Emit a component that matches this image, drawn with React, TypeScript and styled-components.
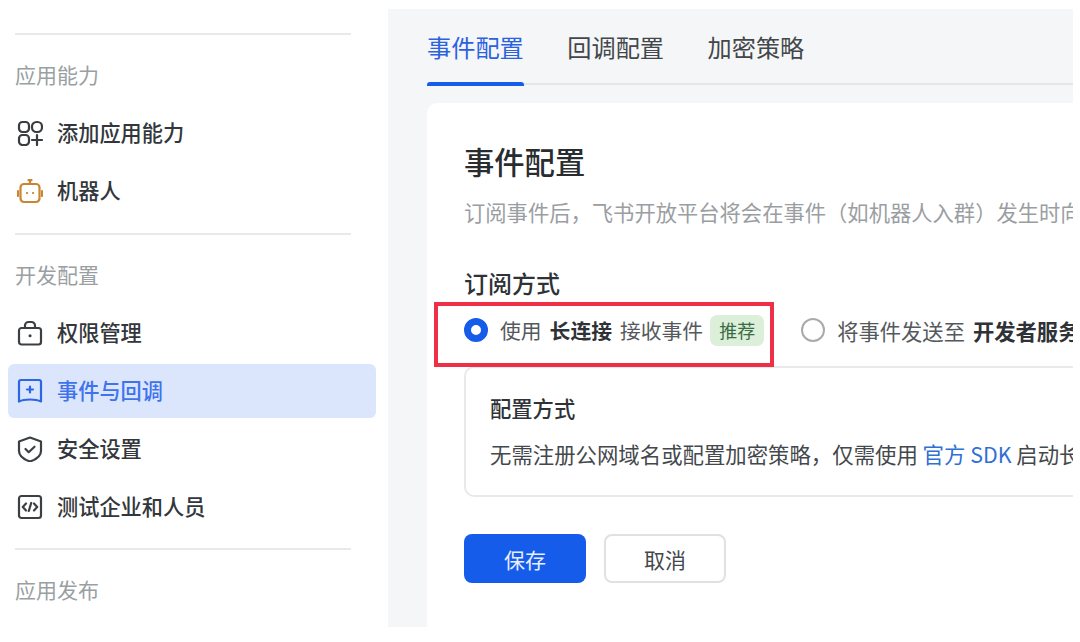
import React from "react";
import styled, { createGlobalStyle } from "styled-components";

const Global = createGlobalStyle`
  html, body { margin: 0; padding: 0; background: #fff; }
  body { font-family: "Noto Sans CJK SC", "Liberation Sans", sans-serif; overflow: hidden; }
  * { box-sizing: border-box; }
`;

const Page = styled.div`
  position: relative;
  width: 1080px;
  height: 642px;
  display: flex;
  background: #fff;
  overflow: hidden;
`;

const Sidebar = styled.aside`
  width: 388px;
  flex: none;
  padding: 33px 12px 0 8px;
  display: flex;
  flex-direction: column;
`;

const Divider = styled.hr`
  margin: 0 24px 0 7px;
  width: 336px;
  height: 2px;
  flex: none;
  border: 0;
  background: #e7e9ea;
`;

const SectionTitle = styled.div`
  margin: 24px 0 0 7px;
  height: 30px;
  line-height: 30px;
  font-size: 21px;
  color: #9a9fa3;
`;

const Item = styled.div<{ $active?: boolean }>`
  height: 54px;
  display: flex;
  align-items: center;
  gap: 14px;
  padding-left: 9px;
  width: 368px;
  border-radius: 6px;
  font-size: 21.2px;
  font-weight: 500;
  color: ${(p) => (p.$active ? "#3f73ec" : "#33373b")};
  background: ${(p) => (p.$active ? "#dbe6fc" : "transparent")};
  svg { flex: none; width: 26px; height: 26px; }
`;

const ItemLabel = styled.span`
  padding-bottom: 3px;
`;

const ItemList = styled.div<{ $bottom: number }>`
  margin: 17px 0 ${(p) => p.$bottom}px;
  display: flex;
  flex-direction: column;
  gap: 4px;
`;

const Main = styled.main`
  width: 685px;
  height: 618px;
  margin-top: 9px;
  flex: none;
  background: #f5f6f7;
  padding-left: 39px;
  display: flex;
  flex-direction: column;
  overflow: hidden;
`;

const Tabs = styled.nav`
  height: 76px;
  flex: none;
  display: flex;
  gap: 43.5px;
  border-bottom: 2px solid #e4e6e8;
`;

const Tab = styled.div<{ $active?: boolean }>`
  position: relative;
  height: 76px;
  padding-top: 18px;
  line-height: 40px;
  font-size: 24.2px;
  color: ${(p) => (p.$active ? "#2c62e0" : "#43474b")};
  ${(p) =>
    p.$active &&
    `&::after { content: ""; position: absolute; left: 0; right: 0; bottom: -1px; height: 4px; background: #165ceb; border-radius: 3px 3px 0 0; }`}
`;

const Card = styled.section`
  margin-top: 18px;
  flex: 1;
  background: #fff;
  border-radius: 10px 0 0 0;
  padding: 36px 0 0 37px;
  white-space: nowrap;
  overflow: hidden;
`;

const CardTitle = styled.h1`
  margin: 0;
  font-size: 30.3px;
  line-height: 44px;
  font-weight: 500;
  color: #2a2d30;
`;

const Desc = styled.p`
  margin: 14px 0 0;
  font-size: 21.3px;
  line-height: 30px;
  color: #9a9ea2;
`;

const SubTitle = styled.h2`
  margin: 39px 0 0;
  font-size: 24px;
  line-height: 34px;
  font-weight: 500;
  color: #2f3236;
`;

const Options = styled.div`
  display: flex;
  align-items: center;
  height: 40px;
  margin-top: 10px;
`;

const Option = styled.div<{ $gap: number; $size: number }>`
  display: flex;
  align-items: center;
  font-size: ${(p) => p.$size}px;
  color: #55595d;
  margin-right: ${(p) => p.$gap}px;
  b { font-weight: 700; color: #2f3236; margin: 0 8px; }
`;

const Radio = styled.span<{ $on?: boolean }>`
  width: 24px;
  height: 24px;
  margin-right: 12px;
  flex: none;
  border-radius: 50%;
  background: #fff;
  border: ${(p) => (p.$on ? "7px solid #165ceb" : "2px solid #a8aaac")};
`;

const Tag = styled.span`
  display: inline-block;
  margin-left: 7px;
  width: 54px;
  height: 31px;
  line-height: 30px;
  text-align: center;
  border-radius: 7px;
  font-size: 18px;
  color: #3a6b45;
  background: #dbefd9;
`;

const Highlight = styled.div`
  position: absolute;
  left: 434px;
  top: 302px;
  width: 340px;
  height: 65px;
  border: 4px solid #ee2f45;
  pointer-events: none;
`;

const ConfigBox = styled.div`
  margin-top: 16px;
  height: 131px;
  width: 640px;
  border: 2px solid #e8e9eb;
  border-right: 0;
  border-radius: 10px 0 0 10px;
  padding: 25px 0 0 24px;
`;

const BoxTitle = styled.div`
  font-size: 21.3px;
  line-height: 30px;
  font-weight: 500;
  color: #2f3236;
`;

const BoxText = styled.div`
  margin-top: 16px;
  font-size: 21.4px;
  line-height: 30px;
  color: #44484c;
  a { color: #2f6fd6; text-decoration: none; }
`;

const Actions = styled.div`
  margin-top: 37px;
  display: flex;
  gap: 18px;
`;

const Button = styled.button<{ $primary?: boolean }>`
  width: 122px;
  height: 49px;
  border-radius: 8px;
  font: inherit;
  font-size: 21px;
  color: ${(p) => (p.$primary ? "#e6eeff" : "#44484c")};
  background: ${(p) => (p.$primary ? "#165ceb" : "#fff")};
  border: ${(p) => (p.$primary ? "0" : "2px solid #dfe1e3")};
`;

const Stroke = { fill: "none", stroke: "currentColor", strokeWidth: 2.2, strokeLinecap: "round", strokeLinejoin: "round" } as const;

const AddIcon = () => (
  <svg viewBox="0 0 26 26" {...Stroke} color="#3a3d40">
    <rect x="2" y="2" width="10" height="10" rx="3.5" />
    <rect x="15" y="2" width="10" height="10" rx="4.5" />
    <rect x="2" y="15" width="10" height="10" rx="3.5" />
    <path d="M20 15v10M15 20h10" />
  </svg>
);
const RobotIcon = () => (
  <svg viewBox="0 0 26 26" {...Stroke} color="#c98533">
    <rect x="3.5" y="6" width="19" height="18" rx="3.5" />
    <path d="M13 6V3M11.5 2.2h3M1 13v5M25 13v5" />
    <path d="M10 15h.1M16 15h.1" />
  </svg>
);
const LockIcon = () => (
  <svg viewBox="0 0 26 26" {...Stroke} color="#3d4043">
    <rect x="2" y="8" width="22" height="16.5" rx="2.5" />
    <path d="M8 8V5.5A3.5 3.5 0 0 1 11.5 2h3A3.5 3.5 0 0 1 18 5.5V8" />
    <path d="M13 15.8h.1" strokeWidth="3" />
  </svg>
);
const EventIcon = () => (
  <svg viewBox="0 0 26 26" {...Stroke} color="#2c66e8">
    <path d="M2 4a2 2 0 0 1 2-2h18a2 2 0 0 1 2 2v19.5c-3-1.5-7-2-11-2s-8 .5-11 2z" />
    <path d="M13 8.5v6M10 11.5h6" />
  </svg>
);
const ShieldIcon = () => (
  <svg viewBox="0 0 26 26" {...Stroke} color="#3d4043">
    <path d="M13 1.5 24 5.5V15c0 5-5 8.500-11 10.500C7 23.500 2 20 2 15V5.500z" />
    <path d="M8.500 13l3.200 3.200 5.800-5.500" />
  </svg>
);
const CodeIcon = () => (
  <svg viewBox="0 0 26 26" {...Stroke} color="#3d4043">
    <rect x="2" y="2" width="22" height="22" rx="2.5" />
    <path d="M9 9.500 5.800 13 9 16.500M17 9.500l3.200 3.500-3.200 3.500M14.200 9l-2.400 8" />
  </svg>
);

export default function App() {
  return (
    <Page>
      <Global />
      <Sidebar>
        <Divider />
        <SectionTitle>应用能力</SectionTitle>
        <ItemList $bottom={15}>
          <Item><AddIcon /><ItemLabel>添加应用能力</ItemLabel></Item>
          <Item><RobotIcon /><ItemLabel>机器人</ItemLabel></Item>
        </ItemList>
        <Divider />
        <SectionTitle>开发配置</SectionTitle>
        <ItemList $bottom={14}>
          <Item><LockIcon /><ItemLabel>权限管理</ItemLabel></Item>
          <Item $active><EventIcon /><ItemLabel>事件与回调</ItemLabel></Item>
          <Item><ShieldIcon /><ItemLabel>安全设置</ItemLabel></Item>
          <Item><CodeIcon /><ItemLabel>测试企业和人员</ItemLabel></Item>
        </ItemList>
        <Divider />
        <SectionTitle>应用发布</SectionTitle>
      </Sidebar>
      <Main>
        <Tabs>
          <Tab $active>事件配置</Tab>
          <Tab>回调配置</Tab>
          <Tab>加密策略</Tab>
        </Tabs>
        <Card>
          <CardTitle>事件配置</CardTitle>
          <Desc>订阅事件后，飞书开放平台将会在事件（如机器人入群）发生时向</Desc>
          <SubTitle>订阅方式</SubTitle>
          <Options>
            <Option $gap={37} $size={20.8}>
              <Radio $on />
              <span>使用<b>长连接</b>接收事件</span>
              <Tag>推荐</Tag>
            </Option>
            <Option $gap={0} $size={21.3}>
              <Radio />
              <span>将事件发送至<b>开发者服务器</b></span>
            </Option>
          </Options>
          <ConfigBox>
            <BoxTitle>配置方式</BoxTitle>
            <BoxText>无需注册公网域名或配置加密策略，仅需使用 <a>官方 SDK</a> 启动长连接</BoxText>
          </ConfigBox>
          <Actions>
            <Button $primary>保存</Button>
            <Button>取消</Button>
          </Actions>
        </Card>
      </Main>
      <Highlight />
    </Page>
  );
}
